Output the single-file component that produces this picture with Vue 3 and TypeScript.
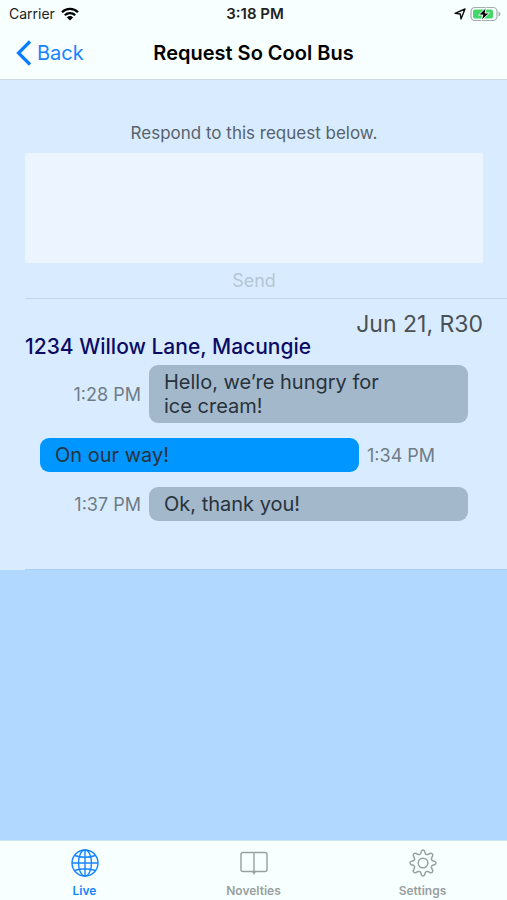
<script setup lang="ts">
import { ref } from 'vue'

interface Message {
  id: number
  text: string
  time: string
  sent: boolean
}

const reply = ref('')

const messages: Message[] = [
  { id: 1, text: 'Hello, we’re hungry for ice cream!', time: '1:28 PM', sent: false },
  { id: 2, text: 'On our way!', time: '1:34 PM', sent: true },
  { id: 3, text: 'Ok, thank you!', time: '1:37 PM', sent: false },
]
</script>

<template>
  <div class="screen">
    <header class="top">
      <div class="status">
        <div class="status-left">
          <span>Carrier</span>
          <svg width="18" height="14" viewBox="0 0 18 14" aria-hidden="true">
            <g fill="none" stroke="#000" stroke-width="2.3">
              <path d="M1 5.2a11.4 11.4 0 0 1 16 0" />
              <path d="M3.8 8.2a7.4 7.4 0 0 1 10.4 0" />
            </g>
            <path d="M9 13.6 5.9 10.4a4.4 4.4 0 0 1 6.2 0z" />
          </svg>
        </div>
        <span class="clock">3:18 PM</span>
        <div class="status-right">
          <svg width="12" height="12" viewBox="0 0 12 12" aria-hidden="true">
            <path d="M11 1 7 11 6.3 6 1 5.4z" fill="none" stroke="#111" stroke-width="1.4" stroke-linejoin="round" />
          </svg>
          <svg width="31" height="16" viewBox="0 0 31 16" aria-hidden="true">
            <rect x="1" y="1.5" width="26" height="13" rx="4" fill="none" stroke="#a3adac" stroke-width="1.2" />
            <rect x="3" y="3.5" width="20" height="9" rx="2" fill="#43d668" />
            <path d="M28.5 5.5q2 .8 2 2.5t-2 2.5z" fill="#a3adac" />
            <path d="M16.2 1.5 8.5 9h4.3l-1.5 5.5L19.5 7h-4.3z" fill="#000" stroke="#f6fffe" stroke-width="1" />
          </svg>
        </div>
      </div>
      <nav class="nav">
        <a class="back" href="#">
          <svg width="16" height="26" viewBox="0 0 16 26" aria-hidden="true">
            <path d="M14 1.5 2.5 13 14 24.5" fill="none" stroke="#0a7cff" stroke-width="3.2" />
          </svg>
          <span>Back</span>
        </a>
        <h1>Request So Cool Bus</h1>
        <span></span>
      </nav>
    </header>

    <main class="content">
      <section class="panel">
        <form class="respond" @submit.prevent>
          <label for="reply">Respond to this request below.</label>
          <textarea id="reply" v-model="reply"></textarea>
          <button type="submit" :disabled="reply.trim() === ''">Send</button>
        </form>
        <div class="thread">
          <p class="date">Jun 21, R30</p>
          <h2>1234 Willow Lane, Macungie</h2>
          <ul class="messages">
            <li v-for="m in messages" :key="m.id" :class="{ sent: m.sent }">
              <div class="bubble"><p>{{ m.text }}</p></div>
              <time>{{ m.time }}</time>
            </li>
          </ul>
        </div>
      </section>
    </main>

    <nav class="tabs">
      <a class="active" href="#">
        <svg width="30" height="30" viewBox="0 0 30 30" aria-hidden="true">
          <g fill="none" stroke="currentColor" stroke-width="1.4">
            <circle cx="15" cy="15" r="13" />
            <ellipse cx="15" cy="15" rx="6.5" ry="13" />
            <path d="M15 2v26M2 15h26M4.6 7.5q10.4 3.6 20.8 0M4.6 22.5q10.4-3.6 20.8 0" />
          </g>
        </svg>
        <span>Live</span>
      </a>
      <a href="#">
        <svg width="30" height="30" viewBox="0 0 30 30" aria-hidden="true">
          <g fill="none" stroke="currentColor" stroke-width="1.4">
            <rect x="2" y="4.500" width="26" height="19" rx="2" />
            <path d="M15 4.500v21" />
            <path d="M13.300 23.500q1.200.4 1.700 1.800.5-1.400 1.700-1.800" />
          </g>
        </svg>
        <span>Novelties</span>
      </a>
      <a href="#">
        <svg width="30" height="30" viewBox="0 0 30 30" aria-hidden="true">
          <g fill="none" stroke="currentColor" stroke-width="1.5" stroke-linejoin="round">
            <path d="M15 2q1.300 0 1.700 1.500l.5 1.700q.3 1 1.300 1.300t1.900-.2l1.400-.8q1.400-.7 2.400.3t.3 2.400l-.8 1.400q-.5 1-.2 1.900t1.300 1.300l1.700.5Q28 13.700 28 15t-1.500 1.700l-1.700.5q-1 .3-1.300 1.300t.2 1.900l.8 1.400q.7 1.400-.3 2.400t-2.400.3l-1.400-.8q-1-.5-1.900-.2t-1.300 1.300l-.5 1.700Q16.300 28 15 28t-1.700-1.500l-.5-1.700q-.3-1-1.300-1.300t-1.900.2l-1.400.8q-1.400.7-2.400-.3t-.3-2.400l.8-1.400q.5-1 .2-1.900t-1.300-1.300l-1.700-.5Q2 16.300 2 15t1.500-1.700l1.700-.5q1-.3 1.300-1.300t-.2-1.900l-.8-1.400q-.7-1.400.3-2.400t2.400-.3l1.400.8q1 .5 1.900.2t1.300-1.300l.5-1.700Q13.700 2 15 2z" />
            <circle cx="15" cy="15" r="4.8" />
          </g>
        </svg>
        <span>Settings</span>
      </a>
    </nav>
  </div>
</template>

<style>
body {
  margin: 0;
  background: #b1d8ff;
}
</style>

<style scoped>
.screen {
  min-height: 100vh;
  display: flex;
  flex-direction: column;
  font-family: Inter, "Liberation Sans", sans-serif;
  background: #b1d8ff;
}
h1, h2, p, ul {
  margin: 0;
  padding: 0;
}
a {
  text-decoration: none;
}
.top {
  background: #f8ffff;
  border-bottom: 1px solid #cbd8df;
}
.status {
  display: grid;
  grid-template-columns: 1fr auto 1fr;
  align-items: center;
  height: 27px;
  padding: 0 6px 0 9px;
  font-size: 14px;
  color: #222;
}
.status-left, .status-right {
  display: flex;
  align-items: center;
  gap: 6px;
}
.status-right {
  justify-content: flex-end;
  gap: 4px;
}
.clock {
  font-size: 15px;
  font-weight: 600;
}
.nav {
  display: grid;
  grid-template-columns: 1fr auto 1fr;
  align-items: center;
  height: 52px;
  padding: 0 16px;
}
.back {
  display: flex;
  align-items: center;
  gap: 5px;
  font-size: 20px;
  color: #1684ff;
}
h1 {
  font-size: 20px;
  font-weight: 600;
  color: #000;
}
.content {
  flex: 1;
}
.panel {
  padding: 40px 0 0 25px;
  background: #d9ecff;
}
.respond {
  display: flex;
  flex-direction: column;
  align-items: center;
  border-bottom: 1px solid #c2d6e8;
  padding-right: 24px;
}
label {
  padding-bottom: 7px;
  font-size: 17px;
  line-height: 26px;
  color: #56626c;
}
textarea {
  box-sizing: border-box;
  width: 100%;
  height: 110px;
  padding: 8px;
  border: 0;
  border-radius: 2px;
  outline: 0;
  resize: none;
  background: #ecf5ff;
  font: inherit;
  font-size: 18px;
}
button {
  padding: 6px 12px 5px;
  border: 0;
  background: none;
  font: inherit;
  font-size: 18px;
  line-height: 24px;
  color: #1684ff;
}
button:disabled {
  color: #b5c6d6;
}
.thread {
  padding: 14px 24px 48px 0;
  border-bottom: 1px solid #abcff2;
}
.date {
  font-size: 23px;
  line-height: 22px;
  text-align: right;
  color: #4a5055;
}
h2 {
  font-size: 21px;
  line-height: 24px;
  font-weight: 500;
  color: #0b0b64;
}
.messages {
  display: flex;
  flex-direction: column;
  gap: 15px;
  padding: 6px 15px 0;
  list-style: none;
}
li {
  display: flex;
  flex-direction: row-reverse;
  align-items: center;
  gap: 8px;
}
.sent {
  flex-direction: row;
}
.bubble {
  box-sizing: border-box;
  width: calc(75% - 2px);
  padding: 5px 15px;
  border-radius: 9px;
  background: #a4b8cb;
  font-size: 20px;
  line-height: 24px;
  color: #27323b;
}
.bubble p {
  max-width: 240px;
}
.sent .bubble {
  background: #0096ff;
}
time {
  font-size: 18px;
  color: #6f7c87;
}
.tabs {
  display: grid;
  grid-template-columns: repeat(3, 1fr);
  height: 59px;
  border-top: 1px solid #cfe3ee;
  background: #f8ffff;
}
.tabs a {
  display: flex;
  flex-direction: column;
  align-items: center;
  gap: 5px;
  padding-top: 7px;
  font-size: 12px;
  font-weight: 600;
  line-height: 16px;
  color: #999f9f;
}
.tabs .active {
  color: #1684ff;
}
</style>
